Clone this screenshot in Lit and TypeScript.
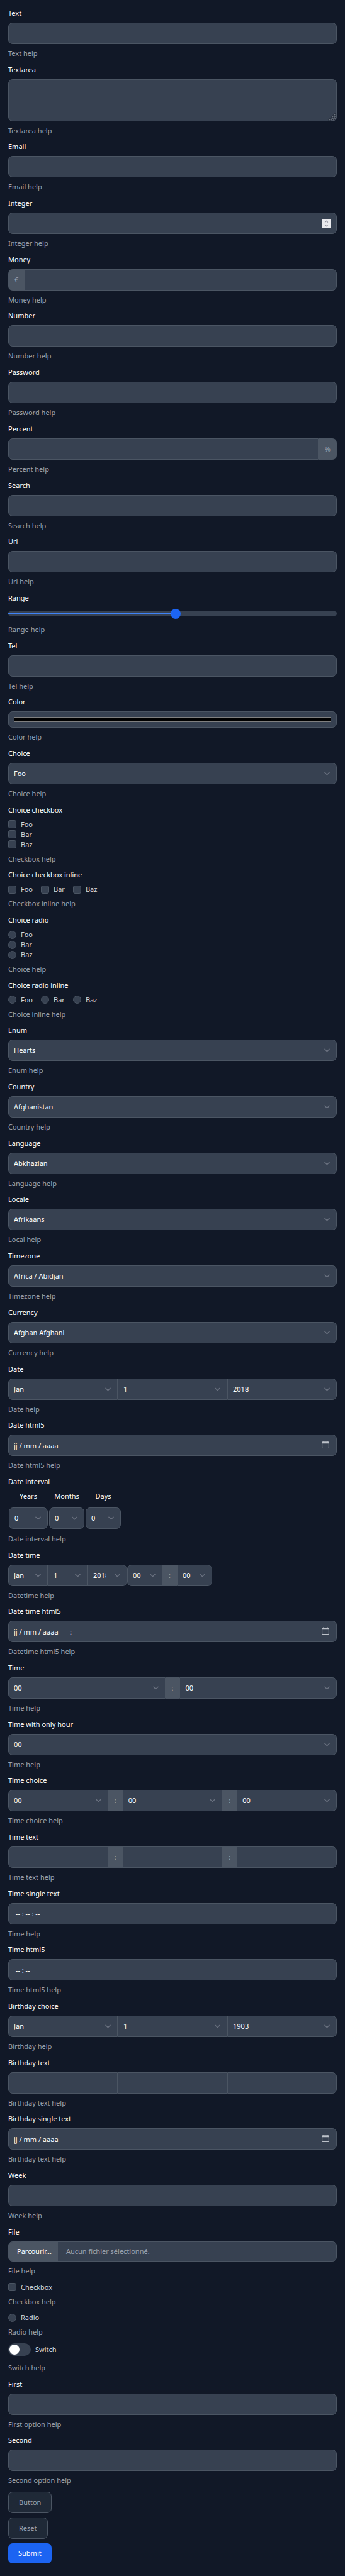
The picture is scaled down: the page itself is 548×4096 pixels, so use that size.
import { LitElement, html, css, nothing, TemplateResult } from "lit";
import { customElement, property } from "lit/decorators.js";

const chevron = html`<svg class="chevron" viewBox="0 0 10 6" aria-hidden="true">
  <path d="m1 1 4 4 4-4" fill="none" stroke="#6b7280" stroke-width="1.5" stroke-linecap="round" stroke-linejoin="round" />
</svg>`;

const calendar = html`<svg class="calendar" viewBox="0 0 14 14" aria-hidden="true">
  <path
    fill="#bcc1c9"
    fill-rule="evenodd"
    d="M3 0h1.4v1.4h5.2V0H11v1.4h1.2A1.8 1.8 0 0 1 14 3.200v9A1.800 1.800 0 0 1 12.200 14H1.800A1.800 1.800 0 0 1 0 12.200v-9A1.800 1.800 0 0 1 1.800 1.400H3zM1.300 5v7.200c0 .3.200.5.500.5h10.400c.3 0 .5-.2.500-.5V5z"
  />
</svg>`;

const spinner = html`<svg class="spinner" viewBox="0 0 18 18" aria-hidden="true">
  <rect width="18" height="18" fill="#e9e9ed" />
  <path d="M6.200 6.600 9 3.900l2.800 2.700M6.200 11.400 9 14.100l2.800-2.700" fill="none" stroke="#8f8f9d" stroke-width="1.500" />
</svg>`;

const grip = html`<svg class="grip" viewBox="0 0 15 15" aria-hidden="true">
  <path d="M0 14.500 14.500 0M4 14.500 14.500 4M8 14.500 14.500 8M12 14.500 14.500 12" fill="none" stroke="#1f2530" stroke-width="1.200" />
  <path d="M2 14.500 14.500 2M6 14.500 14.500 6M10 14.500 14.500 10" fill="none" stroke="#8b9098" stroke-width="1" />
</svg>`;

const range = (from: number, to: number) => Array.from({ length: to - from + 1 }, (_, i) => String(from + i));
const pad = (list: string[]) => list.map((v) => v.padStart(2, "0"));
const days = range(1, 31);
const months = ["Jan", "Feb", "Mar", "Apr", "May", "Jun", "Jul", "Aug", "Sep", "Oct", "Nov", "Dec"];
const hours = pad(range(0, 23));
const minutes = pad(range(0, 59));

const slug = (s: string) => s.toLowerCase().replace(/[^a-z0-9]+/g, "-");

@customElement("app-root")
export class AppRoot extends LitElement {
  @property({ type: Number }) level = 51;

  static styles = css`
    :host {
      display: block;
      background: #111827;
      color: #fff;
      font-family: "Noto Sans", "Open Sans", sans-serif;
      font-size: 11px;
      line-height: 16px;
    }
    *,
    *::before,
    *::after {
      box-sizing: border-box;
    }
    form {
      min-height: 100vh;
      padding: 13px 13px 20px;
      display: flex;
      flex-direction: column;
      justify-content: space-between;
      gap: 8px;
    }
    .field {
      display: grid;
      gap: 7px;
    }
    .help {
      margin: 0;
      color: #9ca3af;
    }
    input,
    select,
    textarea,
    button {
      font: inherit;
      color: inherit;
      margin: 0;
    }
    .box {
      display: block;
      width: 100%;
      min-width: 0;
      height: 34px;
      padding: 0 8px;
      border: 1px solid #4b5563;
      border-radius: 7px;
      background: #374151;
      appearance: none;
      outline: none;
    }
    input[type="number"]::-webkit-inner-spin-button {
      appearance: none;
    }
    textarea.box {
      height: 67px;
      resize: none;
    }
    select.box {
      padding-right: 33px;
    }
    .stack {
      display: grid;
      min-width: 0;
      align-items: center;
    }
    .stack > * {
      grid-area: 1 / 1;
    }
    .stack > svg {
      justify-self: end;
      pointer-events: none;
    }
    .chevron {
      width: 9px;
      height: 6px;
      margin-right: 11px;
    }
    .calendar {
      width: 12px;
      height: 12px;
      margin: 0 12px 2px 0;
    }
    .spinner {
      width: 15px;
      height: 15px;
      margin-right: 9px;
    }
    .grip {
      width: 12px;
      height: 12px;
      align-self: end;
      margin: 0 2px 1px 0;
    }
    .color {
      height: 26px;
      padding: 8px;
    }
    .color::-webkit-color-swatch-wrapper {
      padding: 0;
    }
    .color::-webkit-color-swatch {
      border: 1px solid #808080;
      border-radius: 0;
    }
    .slider-row {
      height: 20px;
      display: flex;
      align-items: center;
    }
    .slider {
      width: 100%;
      height: 7px;
      border-radius: 4px;
      appearance: none;
      outline: none;
      background: linear-gradient(#3f83f8, #3f83f8) 0 50% / var(--level) 3px no-repeat, #374151;
    }
    .slider::-webkit-slider-thumb {
      appearance: none;
      width: 16px;
      height: 16px;
      border-radius: 50%;
      background: #1c64f2;
    }
    .group {
      display: flex;
    }
    .group > .part {
      flex: 1 1 0;
      min-width: 0;
    }
    .group > .part:not(:last-child) .box {
      border-top-right-radius: 0;
      border-bottom-right-radius: 0;
    }
    .group > .part:not(:first-child) .box {
      border-top-left-radius: 0;
      border-bottom-left-radius: 0;
    }
    .addon {
      display: flex;
      align-items: center;
      padding: 0 10px;
      background: #4b5563;
      color: #9ca3af;
    }
    .addon:first-child {
      border-radius: 7px 0 0 7px;
    }
    .addon:last-child {
      border-radius: 0 7px 7px 0;
    }
    .datetime {
      display: flex;
    }
    .datetime .date {
      width: 189px;
    }
    .datetime .time > .part {
      flex: none;
    }
    .checks {
      display: flex;
      flex-direction: column;
    }
    .checks.inline {
      flex-direction: row;
      gap: 13px;
    }
    .check {
      display: flex;
      align-items: center;
      gap: 7px;
      color: #d1d5db;
    }
    .check input {
      width: 13px;
      height: 13px;
      appearance: none;
      border: 1px solid #4b5563;
      border-radius: 3px;
      background: #374151;
    }
    .check input[type="radio"] {
      border-radius: 50%;
    }
    .check .switch {
      display: flex;
      align-items: center;
      width: 36px;
      height: 20px;
      padding: 2px;
      border: 0;
      border-radius: 10px;
    }
    .switch::before {
      content: "";
      width: 16px;
      height: 16px;
      border-radius: 50%;
      background: #fff;
    }
    .switch-row {
      padding-bottom: 4px;
    }
    .interval {
      justify-self: start;
      border-collapse: collapse;
    }
    .interval th {
      height: 25px;
      padding: 0 1px;
      vertical-align: top;
      font-weight: 400;
    }
    .interval td {
      padding: 1px;
    }
    .file {
      height: 32px;
      padding: 0;
      display: grid;
      grid-template-columns: auto 1fr;
      align-items: center;
      gap: 13px;
      overflow: hidden;
      color: #9ca3af;
    }
    .file .browse {
      align-self: stretch;
      grid-area: 1 / 1;
      display: flex;
      align-items: center;
      padding: 0 10px 0 13px;
      background: #4b5563;
      color: #fff;
    }
    .file .name {
      grid-area: 1 / 2;
    }
    .file input {
      grid-area: 1 / 1 / 2 / 3;
      width: 100%;
      opacity: 0;
    }
    .actions {
      display: flex;
      flex-direction: column;
      align-items: flex-start;
      gap: 7px;
    }
    .btn {
      height: 34px;
      padding: 0 16px;
      border: 1px solid #4b5563;
      border-radius: 7px;
      background: #1f2937;
      color: #9ca3af;
    }
    .btn.primary {
      height: 32px;
      border: 0;
      background: #1c64f2;
      color: #fff;
    }
  `;

  private field(label: string, content: TemplateResult, help = `${label} help`) {
    return html`<div class="field">
      <label for=${slug(label)}>${label}</label>
      ${content}
      <p class="help">${help}</p>
    </div>`;
  }

  private group(label: string, content: TemplateResult, help = `${label} help`) {
    const id = slug(label);
    return html`<div class="field" role="group" aria-labelledby=${id}>
      <div id=${id}>${label}</div>
      ${content}
      <p class="help">${help}</p>
    </div>`;
  }

  private input(label: string, type = "text", help?: string) {
    return this.field(label, html`<input class="box" id=${slug(label)} type=${type} />`, help);
  }

  private dateInput(label: string, value: string, help?: string, icon = true) {
    return this.field(
      label,
      html`<div class="stack">
        <input class="box" id=${slug(label)} type="text" .value=${value} />
        ${icon ? calendar : nothing}
      </div>`,
      help
    );
  }

  private select(name: string, options: string[], value = options[0], id?: string) {
    return html`<div class="stack part">
      <select class="box" id=${id ?? nothing} aria-label=${name}>
        ${options.map((o) => html`<option ?selected=${o === value}>${o}</option>`)}
      </select>
      ${chevron}
    </div>`;
  }

  private choice(label: string, options: string[], help?: string) {
    return this.field(label, this.select(label, options, options[0], slug(label)), help);
  }

  private checks(label: string, type: string, inline: boolean, help: string) {
    return this.group(
      label,
      html`<div class="checks ${inline ? "inline" : ""}">
        ${["Foo", "Bar", "Baz"].map(
          (o) => html`<label class="check"><input type=${type} name=${slug(label)} value=${o} />${o}</label>`
        )}
      </div>`,
      help
    );
  }

  private textPart(name: string) {
    return html`<div class="part"><input class="box" type="text" aria-label=${name} /></div>`;
  }

  private dateSelects(year: number, from: number, to: number) {
    return html`<div class="group date">
      ${this.select("Month", months)}${this.select("Day", days)}${this.select("Year", range(from, to), String(year))}
    </div>`;
  }

  render() {
    const colon = html`<span class="addon">:</span>`;
    return html`<form @submit=${(e: Event) => e.preventDefault()}>
      ${this.input("Text")}
      ${this.field("Textarea", html`<div class="stack"><textarea class="box" id="textarea"></textarea>${grip}</div>`)}
      ${this.input("Email", "email")}
      ${this.field("Integer", html`<div class="stack"><input class="box" id="integer" type="number" />${spinner}</div>`)}
      ${this.field(
        "Money",
        html`<div class="group">
          <span class="addon">€</span>
          <div class="part"><input class="box" id="money" type="text" inputmode="decimal" /></div>
        </div>`
      )}
      ${this.input("Number")} ${this.input("Password", "password")}
      ${this.field(
        "Percent",
        html`<div class="group">
          <div class="part"><input class="box" id="percent" type="text" inputmode="decimal" /></div>
          <span class="addon">%</span>
        </div>`
      )}
      ${this.input("Search", "search")} ${this.input("Url", "url")}
      ${this.field(
        "Range",
        html`<div class="slider-row">
          <input
            class="slider"
            id="range"
            type="range"
            .value=${String(this.level)}
            style="--level: ${this.level}%"
            @input=${(e: Event) => (this.level = Number((e.target as HTMLInputElement).value))}
          />
        </div>`
      )}
      ${this.input("Tel", "tel")}
      ${this.field("Color", html`<input class="box color" id="color" type="color" value="#000000" />`)}
      ${this.choice("Choice", ["Foo", "Bar", "Baz"])}
      ${this.checks("Choice checkbox", "checkbox", false, "Checkbox help")}
      ${this.checks("Choice checkbox inline", "checkbox", true, "Checkbox inline help")}
      ${this.checks("Choice radio", "radio", false, "Choice help")}
      ${this.checks("Choice radio inline", "radio", true, "Choice inline help")}
      ${this.choice("Enum", ["Hearts", "Spades"])}
      ${this.choice("Country", ["Afghanistan", "Albania"])}
      ${this.choice("Language", ["Abkhazian", "Afrikaans"])}
      ${this.choice("Locale", ["Afrikaans", "Albanian"], "Local help")}
      ${this.choice("Timezone", ["Africa / Abidjan", "Africa / Accra"])}
      ${this.choice("Currency", ["Afghan Afghani", "Albanian Lek"])}
      ${this.group("Date", this.dateSelects(2018, 2018, 2028))}
      ${this.dateInput("Date html5", "jj / mm / aaaa")}
      ${this.group(
        "Date interval",
        html`<table class="interval">
          <thead>
            <tr>
              <th scope="col">Years</th>
              <th scope="col">Months</th>
              <th scope="col">Days</th>
            </tr>
          </thead>
          <tbody>
            <tr>
              <td>${this.select("Years", range(0, 100))}</td>
              <td>${this.select("Months", range(0, 12))}</td>
              <td>${this.select("Days", range(0, 31))}</td>
            </tr>
          </tbody>
        </table>`
      )}
      ${this.group(
        "Date time",
        html`<div class="datetime">
          ${this.dateSelects(2018, 2018, 2028)}
          <div class="group time">${this.select("Hour", hours)}${colon}${this.select("Minute", minutes)}</div>
        </div>`,
        "Datetime help"
      )}
      ${this.dateInput("Date time html5", "jj / mm / aaaa   -- : --", "Datetime html5 help")}
      ${this.group(
        "Time",
        html`<div class="group">${this.select("Hour", hours)}${colon}${this.select("Minute", minutes)}</div>`
      )}
      ${this.choice("Time with only hour", hours, "Time help")}
      ${this.group(
        "Time choice",
        html`<div class="group">
          ${this.select("Hour", hours)}${colon}${this.select("Minute", minutes)}${colon}${this.select("Second", minutes)}
        </div>`
      )}
      ${this.group(
        "Time text",
        html`<div class="group">
          ${this.textPart("Hour")}${colon}${this.textPart("Minute")}${colon}${this.textPart("Second")}
        </div>`
      )}
      ${this.dateInput("Time single text", " -- : -- : --", "Time help", false)}
      ${this.dateInput("Time html5", " -- : --", undefined, false)}
      ${this.group("Birthday choice", this.dateSelects(1903, 1903, 2023), "Birthday help")}
      ${this.group(
        "Birthday text",
        html`<div class="group">${this.textPart("Month")}${this.textPart("Day")}${this.textPart("Year")}</div>`
      )}
      ${this.dateInput("Birthday single text", "jj / mm / aaaa", "Birthday text help")}
      ${this.input("Week")}
      ${this.field(
        "File",
        html`<div class="box file">
          <span class="browse">Parcourir...</span>
          <span class="name">Aucun fichier sélectionné.</span>
          <input id="file" type="file" />
        </div>`
      )}
      <div class="field">
        <label class="check"><input type="checkbox" />Checkbox</label>
        <p class="help">Checkbox help</p>
      </div>
      <div class="field">
        <label class="check"><input type="radio" />Radio</label>
        <p class="help">Radio help</p>
      </div>
      <div class="field">
        <div class="switch-row">
          <label class="check"><input class="switch" type="checkbox" role="switch" />Switch</label>
        </div>
        <p class="help">Switch help</p>
      </div>
      ${this.input("First", "text", "First option help")} ${this.input("Second", "text", "Second option help")}
      <div class="actions">
        <button class="btn" type="button">Button</button>
        <button class="btn" type="reset">Reset</button>
        <button class="btn primary" type="submit">Submit</button>
      </div>
    </form>`;
  }
}
